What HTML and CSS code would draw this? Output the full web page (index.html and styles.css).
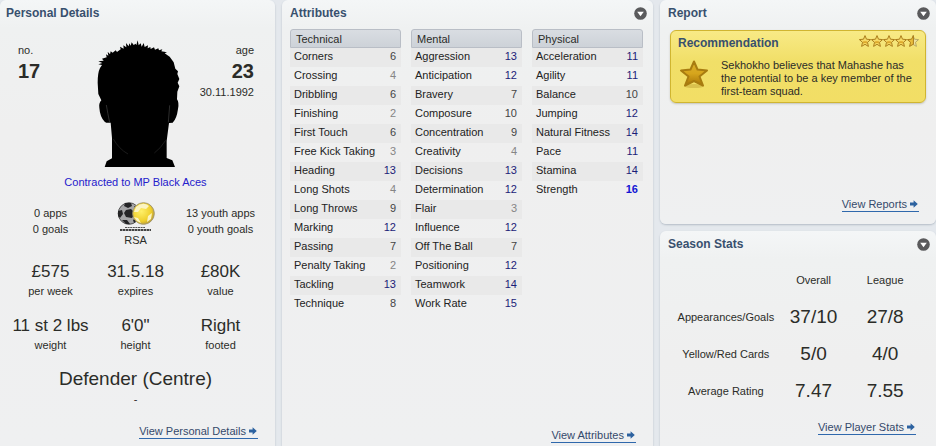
FILE: index.html
```html
<!DOCTYPE html>
<html lang="en">
<head>
<meta charset="utf-8">
<meta name="viewport" content="width=device-width, initial-scale=1">
<title>Player Overview</title>
<link rel="stylesheet" href="styles.css">
</head>
<body>
<svg class="defs" width="0" height="0" aria-hidden="true">
  <defs>
    <linearGradient id="gold" x1="0" y1="0" x2="0" y2="1">
      <stop offset="0" stop-color="#dcb02c"/><stop offset=".5" stop-color="#d6a51c"/><stop offset="1" stop-color="#a87408"/>
    </linearGradient>
    <radialGradient id="sun" cx=".4" cy=".4" r=".65">
      <stop offset="0" stop-color="#fff06a"/><stop offset=".7" stop-color="#efcf2c"/><stop offset="1" stop-color="#b79a3a"/>
    </radialGradient>
    <symbol id="arrow" viewBox="0 0 8 8"><path d="M0 2.4h3.6V.2L7.8 4 3.6 7.8V5.6H0z" fill="#2d62a0"/></symbol>
    <symbol id="menu" viewBox="0 0 13 13"><circle cx="6.5" cy="6.5" r="6.3" fill="#5a5a5c"/><path d="M3.2 4.7h6.6L6.5 9.2z" fill="#fff"/></symbol>
    <symbol id="star" viewBox="0 0 12 12"><path d="M6 .6 7.5 4.2l4.1.4-3.1 2.700.9 4.100L6 9.300 2.600 11.400l.9-4.100L.4 4.600l4.100-.4z" fill="#f6da68" stroke="#ab7d1c" stroke-linejoin="round"/><path d="M4.2 6.2h3.6L8 8.700 6 7.800 4 8.700z" fill="#dba62a"/></symbol>
    <symbol id="halfstar" viewBox="0 0 12 12"><path d="M6 .6 7.5 4.2l4.1.4-3.1 2.700.9 4.100L6 9.300z" fill="#eee3a0" stroke="#b6a865" stroke-linejoin="round"/><path d="M6.400.6V9.200L2.600 11.400l.9-4.100L.4 4.600l4.100-.4z" fill="#e8bd3c" stroke="#ab7d1c" stroke-linejoin="round"/></symbol>
  </defs>
</svg>
<main class="overview">
  <section class="panel personal">
    <header class="panel-head"><h2>Personal Details</h2></header>
    <div class="identity">
      <div class="fact"><span>no.</span><strong>17</strong></div>
      <svg class="photo" viewBox="0 0 300 396" role="img" aria-label="Player silhouette">
        <path d="M56 396 62 379 78 370V309L74 263Q61 265 56 260Q42 246 40 218Q38 204 46 196L37 177 35 143Q35 113 42 99L48 90 37 88 49 84 37 79 53 77 48 71 62 67 60 58 67 62 65 50 72 58 74 49 80 53 89 46 93 51 104 43 102 35 113 41 112 31 121 37 120 24 128 34 130 25 134 32 137 22 143 30 149 26 151 31 155 16 158 31 164 25 167 35 173 24 176 36 186 31 185 40 193 36 194 42 204 37 207 44 217 40 219 46 229 43 226 49 243 52 236 55 251 65 263 82 268 101 276 109 274 117 280 132 275 143 280 154 274 170 273 193Q280 203 276 222Q272 252 260 263L249 264 242 318V369L259 376 267 396Z" fill="#000"/>
        <path d="M61 210Q65 234 71 263M251 211 247 262" fill="none" stroke="#444" stroke-width="2"/>
        <path d="M82 312Q99 342 126 357M239 316Q223 341 205 354" fill="none" stroke="#292929" stroke-width="2"/>
      </svg>
      <div class="fact fact-end"><span>age</span><strong>23</strong><span>30.11.1992</span></div>
    </div>
    <a class="contract" href="#club">Contracted to MP Black Aces</a>
    <div class="thirds caps">
      <p>0 apps<br>0 goals</p>
      <div class="nation">
        <svg viewBox="0 0 40 30" aria-hidden="true">
          <circle cx="13" cy="11.5" r="10.8" fill="#a5a5a7" stroke="#555"/>
          <path d="m10 8 5-1 4 4-3 5-6-1-2-4zM9 1l6 0 1 3-4 2-4-2zM2 9l4-1 1 4-3 4-2-2zM6 18l5 0 3 4-4 0zM18 4l4 2 0 4-3-2zM17 18l4-3 0 3-3 3z" fill="#242426"/>
          <circle cx="27.5" cy="11.5" r="10.8" fill="url(#sun)" stroke="#a59a70"/>
          <path d="M20 5Q27-1 33 4L30 7 25 6 22 10 18 10zM18 15l4 1 3 5-4-2zM32 14l4-3-1 6-4 3z" fill="#fbf4c2"/>
          <path d="M9 25.500h20" stroke="#555" stroke-dasharray="2 .6"/>
          <path d="M4 28h31" stroke="#444" stroke-width="2" stroke-dasharray="2.500 .5"/>
        </svg>
        <span>RSA</span>
      </div>
      <p>13 youth apps<br>0 youth goals</p>
    </div>
    <dl class="thirds vitals">
      <div><dd>£575</dd><dt>per week</dt></div>
      <div><dd>31.5.18</dd><dt>expires</dt></div>
      <div><dd>£80K</dd><dt>value</dt></div>
      <div><dd>11 st 2 lbs</dd><dt>weight</dt></div>
      <div><dd>6'0"</dd><dt>height</dt></div>
      <div><dd>Right</dd><dt>footed</dt></div>
    </dl>
    <p class="position">Defender (Centre)</p>
    <p class="dash">-</p>
    <a class="more" href="#personal">View Personal Details <svg aria-hidden="true"><use href="#arrow"/></svg></a>
  </section>

  <section class="panel attributes">
    <header class="panel-head"><h2>Attributes</h2><button type="button" aria-label="Attributes menu"><svg aria-hidden="true"><use href="#menu"/></svg></button></header>
    <div class="attr-tables">
      <table class="attr">
        <thead><tr><th colspan="2">Technical</th></tr></thead>
        <tbody>
          <tr><td>Corners</td><td class="mid">6</td></tr>
          <tr><td>Crossing</td><td class="low">4</td></tr>
          <tr><td>Dribbling</td><td class="mid">6</td></tr>
          <tr><td>Finishing</td><td class="low">2</td></tr>
          <tr><td>First Touch</td><td class="mid">6</td></tr>
          <tr><td>Free Kick Taking</td><td class="low">3</td></tr>
          <tr><td>Heading</td><td class="good">13</td></tr>
          <tr><td>Long Shots</td><td class="low">4</td></tr>
          <tr><td>Long Throws</td><td class="mid">9</td></tr>
          <tr><td>Marking</td><td class="good">12</td></tr>
          <tr><td>Passing</td><td class="mid">7</td></tr>
          <tr><td>Penalty Taking</td><td class="low">2</td></tr>
          <tr><td>Tackling</td><td class="good">13</td></tr>
          <tr><td>Technique</td><td class="mid">8</td></tr>
        </tbody>
      </table>
      <table class="attr">
        <thead><tr><th colspan="2">Mental</th></tr></thead>
        <tbody>
          <tr><td>Aggression</td><td class="good">13</td></tr>
          <tr><td>Anticipation</td><td class="good">12</td></tr>
          <tr><td>Bravery</td><td class="mid">7</td></tr>
          <tr><td>Composure</td><td class="mid">10</td></tr>
          <tr><td>Concentration</td><td class="mid">9</td></tr>
          <tr><td>Creativity</td><td class="low">4</td></tr>
          <tr><td>Decisions</td><td class="good">13</td></tr>
          <tr><td>Determination</td><td class="good">12</td></tr>
          <tr><td>Flair</td><td class="low">3</td></tr>
          <tr><td>Influence</td><td class="good">12</td></tr>
          <tr><td>Off The Ball</td><td class="mid">7</td></tr>
          <tr><td>Positioning</td><td class="good">12</td></tr>
          <tr><td>Teamwork</td><td class="good">14</td></tr>
          <tr><td>Work Rate</td><td class="good">15</td></tr>
        </tbody>
      </table>
      <table class="attr">
        <thead><tr><th colspan="2">Physical</th></tr></thead>
        <tbody>
          <tr><td>Acceleration</td><td class="good">11</td></tr>
          <tr><td>Agility</td><td class="good">11</td></tr>
          <tr><td>Balance</td><td class="mid">10</td></tr>
          <tr><td>Jumping</td><td class="good">12</td></tr>
          <tr><td>Natural Fitness</td><td class="good">14</td></tr>
          <tr><td>Pace</td><td class="good">11</td></tr>
          <tr><td>Stamina</td><td class="good">14</td></tr>
          <tr><td>Strength</td><td class="top">16</td></tr>
        </tbody>
      </table>
    </div>
    <a class="more" href="#attributes">View Attributes <svg aria-hidden="true"><use href="#arrow"/></svg></a>
  </section>

  <div class="side">
    <section class="panel report">
      <header class="panel-head"><h2>Report</h2><button type="button" aria-label="Report menu"><svg aria-hidden="true"><use href="#menu"/></svg></button></header>
      <article class="card">
        <div class="card-head">
          <h3>Recommendation</h3>
          <span class="rating" role="img" aria-label="4.5 stars">
            <svg><use href="#star"/></svg><svg><use href="#star"/></svg><svg><use href="#star"/></svg><svg><use href="#star"/></svg><svg><use href="#halfstar"/></svg>
          </span>
        </div>
        <div class="card-body">
          <svg class="big-star" viewBox="0 0 30 30" aria-hidden="true">
            <ellipse cx="15" cy="27" rx="10" ry="2" fill="#c9ae3d" opacity=".6"/>
            <path d="M15 2.500 18.500 10.500 28 11.500 20.500 17.500 24 26.500 15 22 6 26.500 9.500 17.500 2 11.500 11.500 10.500Z" fill="url(#gold)" stroke="#a87c10" stroke-width="2" stroke-linejoin="round"/>
          </svg>
          <p>Sekhokho believes that Mahashe has the potential to be a key member of the first-team squad.</p>
        </div>
      </article>
      <a class="more" href="#reports">View Reports <svg aria-hidden="true"><use href="#arrow"/></svg></a>
    </section>

    <section class="panel season">
      <header class="panel-head"><h2>Season Stats</h2><button type="button" aria-label="Season stats menu"><svg aria-hidden="true"><use href="#menu"/></svg></button></header>
      <div class="stats-wrap">
        <table class="stats">
          <thead><tr><td></td><th scope="col">Overall</th><th scope="col">League</th></tr></thead>
          <tbody>
            <tr><th scope="row">Appearances/Goals</th><td>37/10</td><td>27/8</td></tr>
            <tr><th scope="row">Yellow/Red Cards</th><td>5/0</td><td>4/0</td></tr>
            <tr><th scope="row">Average Rating</th><td>7.47</td><td>7.55</td></tr>
          </tbody>
        </table>
      </div>
      <a class="more" href="#stats">View Player Stats <svg aria-hidden="true"><use href="#arrow"/></svg></a>
    </section>
  </div>
</main>
</body>
</html>
```
FILE: styles.css
```css
* { box-sizing: border-box; }
body {
  margin: 0;
  background: #e4e8ed;
  color: #2b2c28;
  font: 11px/16px "Liberation Sans", Arial, sans-serif;
}
h2, h3, p, dl, dd { margin: 0; }
.defs { position: absolute; }

.overview {
  display: grid;
  grid-template-columns: 275fr 371fr 276fr;
  gap: 7px;
  min-height: 100vh;
}
.panel {
  display: flex;
  flex-direction: column;
  border-radius: 6px;
  background: linear-gradient(#f4f6f7, #eff1f1 28px, #efefef 130px, #eff0f1);
  box-shadow: 0 1px 2px #b4bcc6;
}
.personal, .attributes { border-radius: 6px 6px 0 0; }
.panel-head {
  display: flex;
  align-items: center;
  justify-content: space-between;
  height: 26px;
  padding: 0 6px 0 8px;
}
h2, h3 { color: #38506e; font-size: 12px; line-height: 16px; }
.panel-head button {
  width: 13px;
  height: 13px;
  padding: 0;
  border: 0;
  background: none;
}
.panel-head svg { display: block; width: 13px; height: 13px; }

.more {
  align-self: flex-end;
  margin: auto 17px 0 0;
  border-bottom: 1px solid #2f68ac;
  color: #34496b;
  line-height: 14px;
  text-decoration: none;
}
.more svg { width: 8px; height: 8px; margin-right: 1px; }

.personal { padding-bottom: 7px; }
.personal .panel-head { padding-left: 6px; }
.identity {
  display: grid;
  grid-template-columns: 1fr 100px 1fr;
  padding: 9px 21px 0 18px;
}
.photo { display: block; width: 100px; height: 132px; }
.fact { display: flex; flex-direction: column; padding-top: 7px; }
.fact strong { font-size: 20px; line-height: 26px; }
.fact-end { align-items: flex-end; }
.contract {
  margin-top: 7px;
  padding-right: 4px;
  color: #2420cc;
  text-align: center;
  text-decoration: none;
}
.thirds {
  display: grid;
  grid-template-columns: repeat(3, 1fr);
  padding: 0 12px 0 8px;
  text-align: center;
}
.caps { margin-top: 10px; }
.caps p { padding-top: 5px; }
.nation {
  display: flex;
  flex-direction: column;
  align-items: center;
  padding-top: 2px;
}
.nation svg { width: 40px; height: 30px; }
.vitals { margin-top: 13px; row-gap: 16px; }
.vitals > div { display: flex; flex-direction: column; }
.vitals dd { font-size: 17px; line-height: 22px; }
.position {
  margin-top: 14px;
  padding-right: 4px;
  font-size: 19px;
  line-height: 24px;
  text-align: center;
}
.dash { padding-right: 4px; text-align: center; }

.attributes { padding-bottom: 3px; }
.attr-tables {
  display: grid;
  grid-template-columns: repeat(3, 1fr);
  align-items: start;
  gap: 10px;
  padding: 3px 10px 16px 8px;
}
.attr {
  width: 100%;
  border-collapse: separate;
  border-spacing: 0;
}
.attr th {
  height: 19px;
  padding: 0 5px;
  border: 1px solid #b9bec6;
  border-radius: 3px 3px 0 0;
  background: linear-gradient(#d9dde2, #cdd2d8);
  font-weight: normal;
  text-align: left;
}
.attr td {
  height: 19px;
  padding: 0 0 0 4px;
  color: #222;
  vertical-align: top;
}
.attr td:last-child { padding: 0 5px 0 0; text-align: right; }
.attr tbody tr:nth-child(odd) { background: #e9e9e9; }
.attr .low { color: #858585; }
.attr .mid { color: #444; }
.attr .good { color: #1c1c78; }
.attr .top { color: #1414d4; font-weight: bold; }

.side {
  display: grid;
  grid-template-rows: 224fr 215fr;
  gap: 7px;
}
.report { padding-bottom: 12px; }
.season { padding-bottom: 11px; border-radius: 6px 6px 0 0; }
.season .more { margin-right: 20px; }
.card {
  margin: 4px 10px 16px;
  padding: 4px 6px 4px 7px;
  border: 1px solid #d0b530;
  border-radius: 6px;
  background: linear-gradient(#f8ea86, #f1df68 30px, #f2de65);
  box-shadow: 0 1px 2px #c4c4bc;
}
.card-head { display: flex; justify-content: space-between; }
.rating { display: flex; }
.rating svg { width: 12px; height: 12px; }
.card-body { display: flex; gap: 12px; padding: 8px 0 0 1px; }
.card-body p { flex: 1; line-height: 13px; }
.big-star { width: 30px; height: 30px; }

.stats-wrap { padding: 4px 15px 8px 14px; }
.stats {
  width: 100%;
  border-spacing: 0;
  table-layout: fixed;
  text-align: center;
}
.stats tr > * { height: 37px; padding: 0; }
.stats tr > :first-child { width: 42%; }
.stats th { font-weight: normal; }
.stats td { font-size: 19px; }
```
